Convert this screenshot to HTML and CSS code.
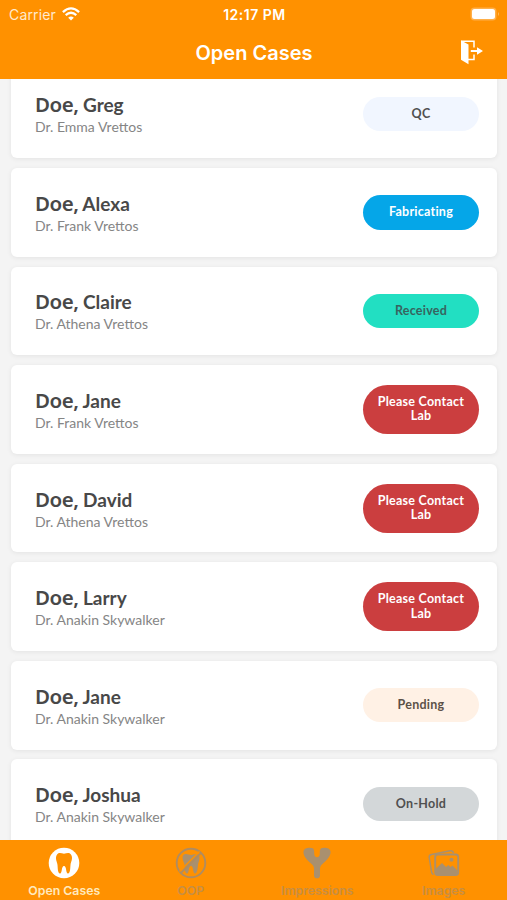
FILE: index.html
```html
<!DOCTYPE html>
<html lang="en">
<head>
	<meta charset="UTF-8">
	<title>Open Cases</title>
	<link rel="stylesheet" href="styles.css">
</head>
<body>
	<header class="header">
		<div class="status">
			<div class="carrier">
				<span>Carrier</span>
				<svg width="18" height="14" viewBox="0 0 18 14" fill="none" stroke="#fff" stroke-width="2.3">
					<path d="M.9 5.1Q9-2.3 17.1 5.1M3.7 8.1Q9 3.5 14.3 8.1" />
					<path d="M9 13.5 6.2 10.7Q9 8.3 11.8 10.7Z" fill="#fff" stroke="none" />
				</svg>
			</div>
			<span class="time">12:17 PM</span>
			<svg class="battery" width="30" height="14" viewBox="0 0 30 14">
				<rect x=".5" y=".5" width="26" height="13" rx="4" fill="#ffb04a" />
				<rect x="2" y="2" width="23" height="10" rx="2.5" fill="#fff" />
				<path d="M28 5q2 2 0 4z" fill="#ffb85c" />
			</svg>
		</div>
		<div class="nav">
			<h1>Open Cases</h1>
			<svg class="logout" width="24" height="25" viewBox="0 0 24 25">
				<path d="M1 .5 8.500 4.500V24.200L1 19.800Z" fill="#fff" />
				<path d="M1 1.300H14V7.500M14 14.500V19.500H8" fill="none" stroke="#fff" stroke-width="1.500" />
				<path d="M10.800 10H17V7.300L23 11 17 14.700V12H10.800Z" fill="#fff" />
			</svg>
		</div>
	</header>

	<main class="cases">
		<div class="card">
			<div class="person">
				<p class="name"><span class="last">Doe,</span> <span class="first">Greg</span></p>
				<p class="doctor">Dr. Emma Vrettos</p>
			</div>
			<span class="badge qc">QC</span>
		</div>
		<div class="card">
			<div class="person">
				<p class="name"><span class="last">Doe,</span> <span class="first">Alexa</span></p>
				<p class="doctor">Dr. Frank Vrettos</p>
			</div>
			<span class="badge fabricating">Fabricating</span>
		</div>
		<div class="card">
			<div class="person">
				<p class="name"><span class="last">Doe,</span> <span class="first">Claire</span></p>
				<p class="doctor">Dr. Athena Vrettos</p>
			</div>
			<span class="badge received">Received</span>
		</div>
		<div class="card">
			<div class="person">
				<p class="name"><span class="last">Doe,</span> <span class="first">Jane</span></p>
				<p class="doctor">Dr. Frank Vrettos</p>
			</div>
			<span class="badge contact">Please Contact Lab</span>
		</div>
		<div class="card">
			<div class="person">
				<p class="name"><span class="last">Doe,</span> <span class="first">David</span></p>
				<p class="doctor">Dr. Athena Vrettos</p>
			</div>
			<span class="badge contact">Please Contact Lab</span>
		</div>
		<div class="card">
			<div class="person">
				<p class="name"><span class="last">Doe,</span> <span class="first">Larry</span></p>
				<p class="doctor">Dr. Anakin Skywalker</p>
			</div>
			<span class="badge contact">Please Contact Lab</span>
		</div>
		<div class="card">
			<div class="person">
				<p class="name"><span class="last">Doe,</span> <span class="first">Jane</span></p>
				<p class="doctor">Dr. Anakin Skywalker</p>
			</div>
			<span class="badge pending">Pending</span>
		</div>
		<div class="card">
			<div class="person">
				<p class="name"><span class="last">Doe,</span> <span class="first">Joshua</span></p>
				<p class="doctor">Dr. Anakin Skywalker</p>
			</div>
			<span class="badge hold">On-Hold</span>
		</div>
	</main>

	<nav class="tabs">
		<a class="tab active">
			<svg width="32" height="32" viewBox="0 0 32 32">
				<circle cx="16" cy="16" r="15.300" fill="#fff" />
				<path d="M8.500 8.500C10.500 4.500 13.500 6.700 16 6.700S21.500 4.500 23.500 8.500C25 12 22.800 15 22.500 18S22.400 26.500 20 26.500 18.800 19 16 19 14.400 26.500 12 26.500 9.800 21 9.500 18 7 12 8.500 8.500Z" fill="#ff9100" />
			</svg>
			<span>Open Cases</span>
		</a>
		<a class="tab">
			<svg width="32" height="32" viewBox="0 0 32 32">
				<circle cx="16" cy="16" r="14.300" fill="none" stroke="#b08c60" stroke-width="1.900" />
				<path d="M8 8.500C10.500 5.500 13.500 8 16 8S21.500 5.500 24 8.500C25.500 12 23.300 15 23 18S22.400 26.500 20 26.500 18.800 19 16 19 14.400 26.500 12 26.500 9.800 21 9.500 18 6.500 12 8 8.500Z" fill="#a9906f" />
				<path d="M4.500 24.500 24.500 4.500" stroke="#ff9100" stroke-width="1.600" />
				<path d="M5.800 26 26 5.800" stroke="#b08c60" stroke-width="1.800" />
			</svg>
			<span>OOP</span>
		</a>
		<a class="tab">
			<svg width="32" height="32" viewBox="0 0 32 32">
				<path d="M10 1C13 1 13.300 3.500 13.200 6.500 13.200 9 14.300 10.300 16 10.300S18.800 9 18.800 6.500C18.700 3.500 19 1 22 1 25 .5 29 1.300 29.500 4.500 30 9 26 13 22.500 16 20 18 19 19.500 19 22V28.500C19 32.300 13 32.300 13 28.500V22C13 19.500 12 18 9.500 16 6 13 2 9 2.500 4.500 3 1.300 7 .5 10 1Z" fill="#a9906f" />
			</svg>
			<span>Impressions</span>
		</a>
		<a class="tab">
			<svg width="32" height="32" viewBox="0 0 32 32" fill="none" stroke="#a9906f">
				<path d="M5.500 27.500Q4 27 3.700 25.500L1.200 10.500Q.9 8 3.500 7.500L22 3.800Q25 3.300 25.500 6" stroke-width="1.500" />
				<rect x="7.200" y="7.500" width="23" height="20.500" rx="2.500" stroke-width="1.900" />
				<path d="M8 27V21.500L14 16 18 20 20.300 18 22.500 20 24.500 18.500 29.500 23.500V27Z" fill="#a9906f" stroke="none" />
				<circle cx="23.500" cy="12.700" r="2" fill="#a9906f" stroke="none" />
			</svg>
			<span>Images</span>
		</a>
	</nav>
</body>
</html>
```
FILE: styles.css
```css
* {
    margin: 0;
    padding: 0;
    box-sizing: border-box;
}

body {
    display: flex;
    flex-direction: column;
    height: 900px;
    overflow: hidden;
    background: #f4f4f4;
    font-family: Lato, "Liberation Sans", sans-serif;
}

.header {
    flex: none;
    height: 79px;
    background: #ff9100;
    color: #fff;
    font-family: Inter, "Liberation Sans", sans-serif;
}

.status {
    display: grid;
    grid-template-columns: 1fr auto 1fr;
    align-items: center;
    height: 27px;
    padding: 0 7px 0 9px;
    font-size: 14px;
    line-height: 27px;
}

.carrier {
    display: flex;
    align-items: center;
    gap: 6px;
    color: #ffe9cd;
    letter-spacing: .15px;
}

.time {
    font-weight: 600;
    font-size: 14px;
    letter-spacing: .5px;
    padding-top: 1px;
}

.battery {
    justify-self: end;
}

.nav {
    display: grid;
    grid-template-columns: 1fr auto 1fr;
    align-items: center;
    height: 50px;
    padding: 0 23px 0 24px;
}

.nav h1 {
    grid-column: 2;
    padding-top: 1px;
    font-size: 20px;
    font-weight: 600;
}

.logout {
    justify-self: end;
}

.cases {
    display: flex;
    flex: 1;
    flex-direction: column;
    gap: 9.9px;
    min-height: 0;
    padding: 0 10px 0 11px;
    overflow: hidden;
}

.card {
    display: flex;
    flex: none;
    align-items: center;
    justify-content: space-between;
    height: 88.7px;
    padding: 0 18px 0 24px;
    border-radius: 6px;
    background: #fff;
    box-shadow: 0 1px 5px rgba(0, 0, 0, .07);
}

/* the list is scrolled a little under the header */
.card:first-child {
    margin-top: -9.6px;
}

.person {
    padding-top: 1px;
}

.name {
    color: #484848;
    font-size: 19px;
    font-weight: 700;
    line-height: 25px;
    white-space: nowrap;
}

.last {
    font-family: "Noto Sans", sans-serif;
    font-size: 20.5px;
    font-weight: 600;
    letter-spacing: -.5px;
}

.doctor {
    color: #858585;
    font-size: 14px;
    line-height: 19px;
}

.badge {
    width: 116px;
    padding: 10px 10px;
    border-radius: 25px;
    color: #505050;
    font-size: 12.5px;
    font-weight: 700;
    line-height: 14.5px;
    letter-spacing: .25px;
    text-align: center;
}

.qc {
    background: #f1f6ff;
}

.fabricating {
    background: #05a6e8;
    color: #fff;
}

.received {
    background: #22dfc2;
    color: #37645f;
}

.contact {
    background: #cb3e3f;
    color: #fff;
}

.pending {
    background: #fff1e5;
    color: #5c5148;
}

.hold {
    background: #d3d7d9;
}

.tabs {
    display: flex;
    flex: none;
    height: 60px;
    padding-left: 1px;
    background: #ff9100;
    font-family: Inter, "Liberation Sans", sans-serif;
}

.tab {
    display: flex;
    flex: 1;
    flex-direction: column;
    align-items: center;
    gap: 4px;
    padding-top: 7px;
    color: #c78e43;
    font-size: 12.3px;
    font-weight: 600;
    line-height: 16px;
}

.active {
    color: #ffe9bd;
}
```
